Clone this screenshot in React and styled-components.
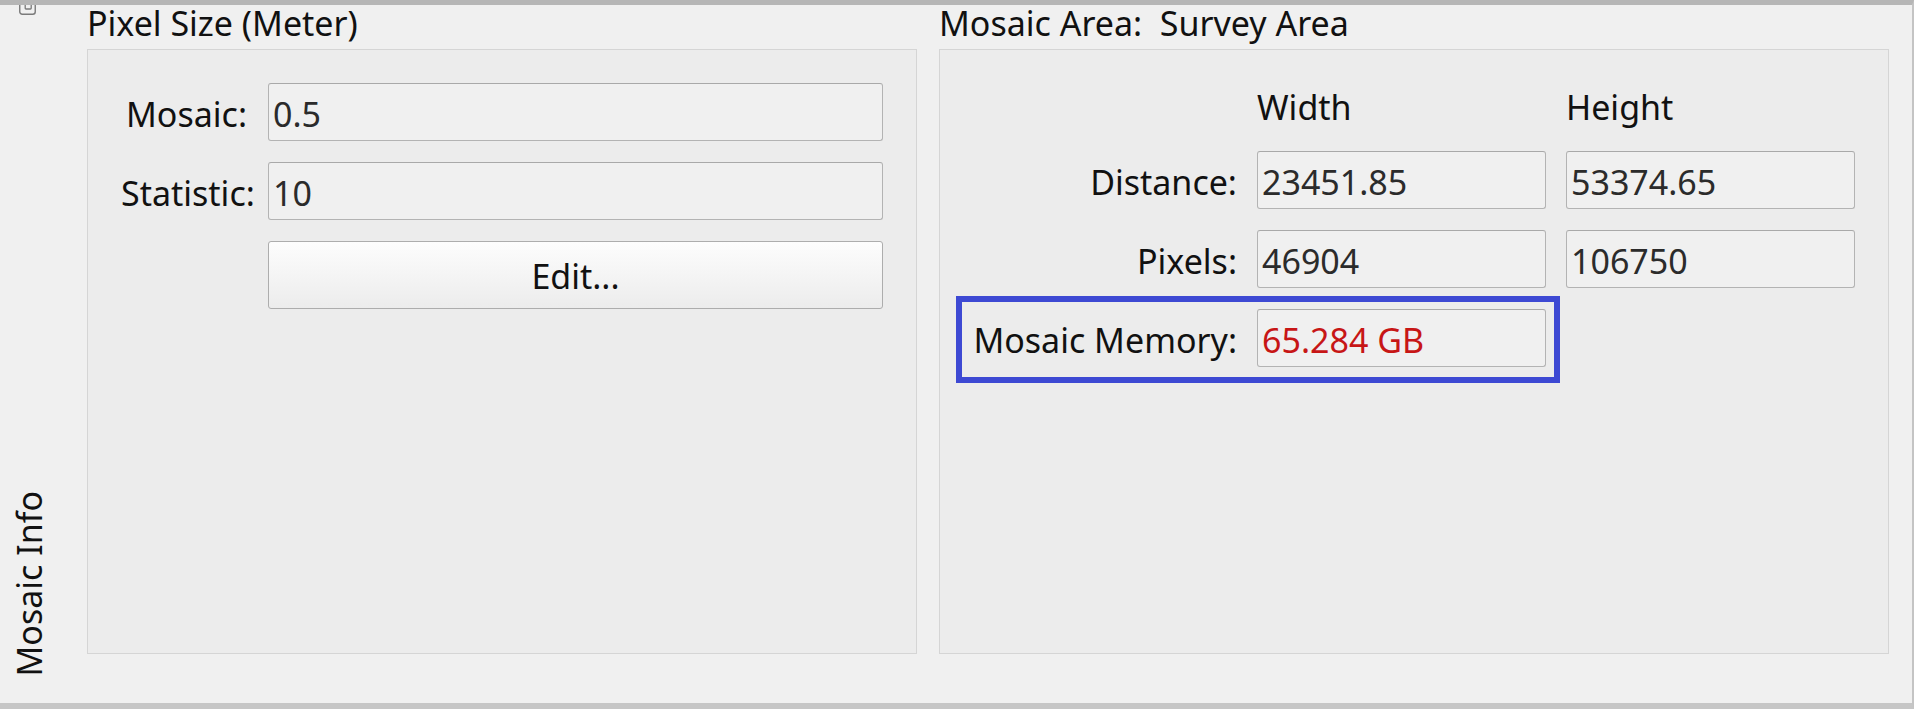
import React from "react";
import styled, { createGlobalStyle } from "styled-components";

const GlobalStyle = createGlobalStyle`
  html, body { margin: 0; padding: 0; background: #f0f0f0; }
  body { font-family: "Noto Sans", "Open Sans", sans-serif; }
  #root { width: 1914px; height: 709px; }
`;

const Window = styled.div`
  box-sizing: border-box;
  width: 1914px;
  height: 709px;
  display: flex;
  background: #f0f0f0;
  border-top: 5px solid #b6b6b6;
  border-bottom: 6px solid #c6c6c6;
  border-right: 2px solid #c4c4c4;
  overflow: hidden;
  color: #111;
`;

const SideTab = styled.div`
  box-sizing: border-box;
  flex: 0 0 87px;
  display: flex;
  flex-direction: column;
  justify-content: space-between;
  align-items: flex-start;
  padding: 0 0 26px 11px;
`;

const FloatIcon = styled.svg`
  display: block;
  margin-left: 8px;
  width: 17px;
  height: 10px;
`;

const SideLabel = styled.div`
  writing-mode: vertical-rl;
  transform: rotate(180deg);
  font-size: 34px;
  line-height: 36px;
  white-space: nowrap;
`;

const Groups = styled.div`
  flex: 1;
  display: flex;
  gap: 22px;
  padding-right: 23px;
  min-width: 0;
`;

const Group = styled.section`
  display: flex;
  flex-direction: column;
  padding-bottom: 49px;
  flex: ${(p) => (p.$width ? `0 0 ${p.$width}px` : "1 1 0")};
  min-width: 0;
`;

const GroupTitle = styled.div`
  font-size: 34px;
  line-height: 36px;
  margin-bottom: 8px;
  white-space: pre;
`;

const Panel = styled.div`
  flex: 1;
  box-sizing: border-box;
  border: 1px solid #d5d5d5;
  background: #ececec;
  display: grid;
  align-content: start;
`;

const PixelForm = styled(Panel)`
  grid-template-columns: 126px 1fr;
  grid-template-rows: 58px 58px 68px;
  column-gap: 21px;
  row-gap: 21px;
  padding: 33px 33px 0 33px;
`;

const AreaForm = styled(Panel)`
  grid-template-columns: 1fr 289px 289px;
  grid-template-rows: 41px 58px 58px 58px;
  column-gap: 20px;
  row-gap: 21px;
  padding: 39px 33px 0 33px;
`;

const Label = styled.div`
  font-size: 34px;
  text-align: right;
  align-self: center;
  white-space: nowrap;
  grid-column: 1;
  grid-row: ${(p) => p.$row};
  padding-top: 3px;
`;

const ColumnHeader = styled.div`
  font-size: 34px;
  line-height: 36px;
  grid-column: ${(p) => p.$col};
  grid-row: 1;
`;

const Field = styled.div`
  box-sizing: border-box;
  grid-column: ${(p) => p.$col};
  grid-row: ${(p) => p.$row};
  display: flex;
  align-items: center;
  padding: 3px 0 0 4px;
  border: 1px solid #b3b3b3;
  border-top-color: #a9a9a9;
  border-radius: 3px;
  background: #f0f0f0;
  font-size: 34px;
  color: ${(p) => (p.$alert ? "#c71616" : "#2b2b2b")};
  white-space: nowrap;
  overflow: hidden;
`;

const Button = styled.button`
  grid-column: 2;
  grid-row: 3;
  box-sizing: border-box;
  height: 100%;
  border: 1px solid #adadad;
  border-radius: 3px;
  background: linear-gradient(#fdfdfd, #ececec);
  font-family: inherit;
  font-size: 34px;
  color: #111;
  padding: 2px 0 0;
  cursor: default;
`;

const Highlight = styled.div`
  grid-column: 1 / 3;
  grid-row: 4;
  box-sizing: border-box;
  margin: -13px -14px -16px -17px;
  border: 6px solid #3d49d3;
  pointer-events: none;
`;

export default function App() {
  return (
    <>
      <GlobalStyle />
      <Window>
        <SideTab>
          <FloatIcon viewBox="0 0 17 10">
            <rect x="0.75" y="-4" width="15.5" height="13.2" rx="2.5" fill="none" stroke="#7a7a7a" strokeWidth="1.4" />
            <rect x="6.2" y="-2" width="6" height="6" rx="0.8" fill="none" stroke="#7a7a7a" strokeWidth="1.3" />
          </FloatIcon>
          <SideLabel>Mosaic Info</SideLabel>
        </SideTab>
        <Groups>
          <Group $width={830}>
            <GroupTitle>Pixel Size (Meter)</GroupTitle>
            <PixelForm>
              <Label $row={1}>Mosaic:</Label>
              <Field $col={2} $row={1}>0.5</Field>
              <Label $row={2}>Statistic:</Label>
              <Field $col={2} $row={2}>10</Field>
              <Button>Edit...</Button>
            </PixelForm>
          </Group>
          <Group>
            <GroupTitle>{"Mosaic Area:  Survey Area"}</GroupTitle>
            <AreaForm>
              <ColumnHeader $col={2}>Width</ColumnHeader>
              <ColumnHeader $col={3}>Height</ColumnHeader>
              <Label $row={2}>Distance:</Label>
              <Field $col={2} $row={2}>23451.85</Field>
              <Field $col={3} $row={2}>53374.65</Field>
              <Label $row={3}>Pixels:</Label>
              <Field $col={2} $row={3}>46904</Field>
              <Field $col={3} $row={3}>106750</Field>
              <Label $row={4}>Mosaic Memory:</Label>
              <Field $col={2} $row={4} $alert>65.284 GB</Field>
              <Highlight />
            </AreaForm>
          </Group>
        </Groups>
      </Window>
    </>
  );
}
